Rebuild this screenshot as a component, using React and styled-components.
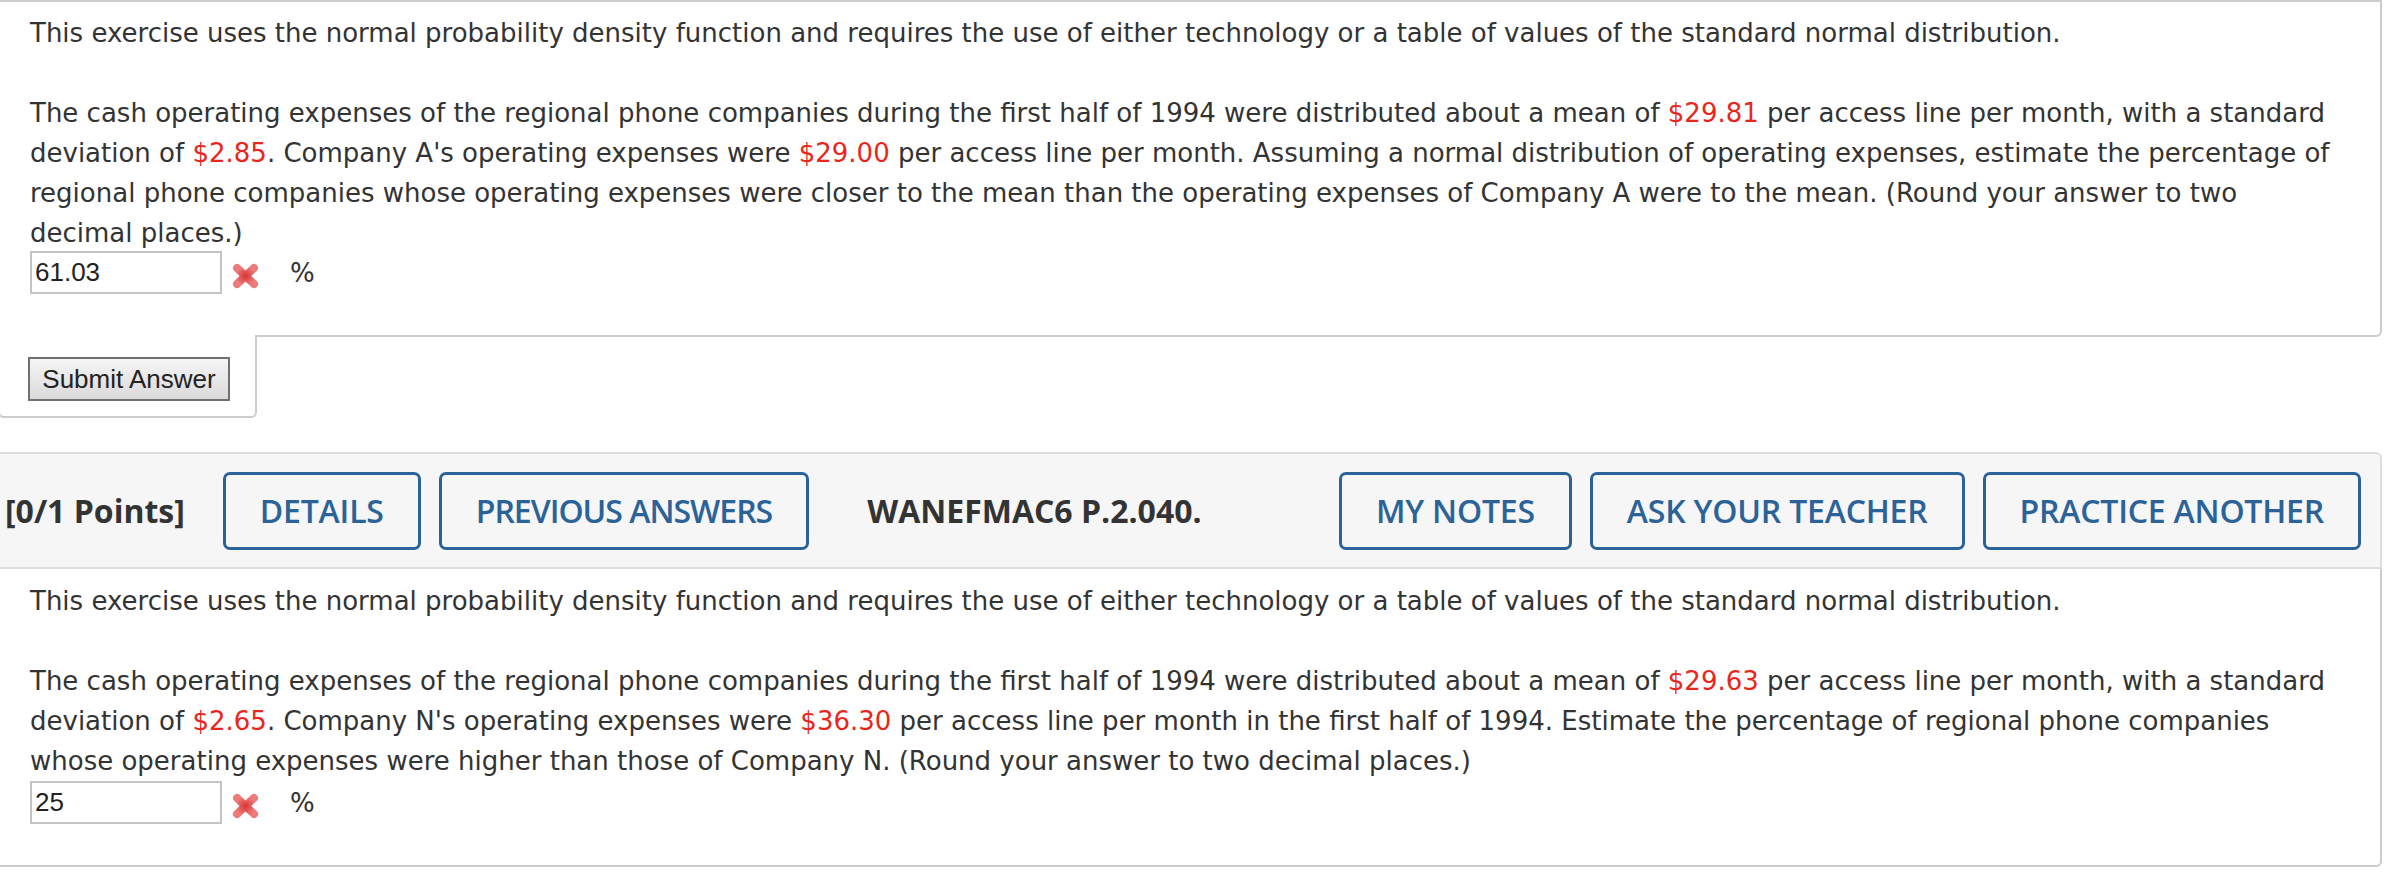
import React from 'react';
import styled, { createGlobalStyle } from 'styled-components';

const GlobalStyle = createGlobalStyle`
  body {
    margin: 0;
    background: #fff;
  }
`;

const Page = styled.div`
  margin-left: -2px;
  width: 2384px;
  font-family: "DejaVu Sans", Verdana, sans-serif;
  font-size: 26px;
  line-height: 40px;
  color: #333;

  * {
    box-sizing: border-box;
  }
`;

const QuestionBox = styled.div`
  border: 2px solid #ccc;
  border-radius: 0 0 6px 0;
  padding: 11px 28px 41px 30px;
`;

const LastBox = styled(QuestionBox)`
  border-top: none;
  padding-top: 12px;
`;

const Para = styled.p`
  margin: 0 0 ${(p) => (p.$gap ? '40px' : '0')};
  white-space: nowrap;
`;

const Red = styled.span`
  color: #e8271c;
`;

const AnswerRow = styled.div`
  display: flex;
  align-items: center;
  height: 43px;
  margin-top: ${(p) => p.$shift || 0}px;
`;

const AnswerInput = styled.input`
  width: 192px;
  height: 43px;
  border: 2px solid #c4c4c4;
  padding: 0 0 0 3px;
  font-family: "Liberation Sans", Arial, sans-serif;
  font-size: 26px;
  color: #222;
  background: #fff;
  margin: 0;
`;

const Percent = styled.span`
  margin-left: 31px;
`;

const Mark = styled.svg`
  width: 27px;
  height: 26px;
  margin-left: 10px;
  margin-top: 6px;
`;

const SubmitTab = styled.div`
  position: relative;
  margin-top: -2px;
  width: 259px;
  background: #fff;
  border: 2px solid #ccc;
  border-top: none;
  border-radius: 0 0 6px 6px;
  padding: 22px 0 15px 28px;
`;

const SubmitButton = styled.button`
  display: block;
  width: 202px;
  height: 44px;
  padding: 0;
  border: 2px solid #707070;
  background: linear-gradient(#f5f5f5, #dadada);
  font-family: "Liberation Sans", Arial, sans-serif;
  font-size: 26px;
  color: #222;
`;

const Toolbar = styled.div`
  margin-top: 34px;
  height: 117px;
  display: flex;
  align-items: center;
  justify-content: space-between;
  padding: 0 19px 0 5px;
  background: #f6f6f6;
  border: 2px solid #ddd;
  border-radius: 0 6px 0 0;
  font-family: "Open Sans", "DejaVu Sans", sans-serif;
  font-size: 32px;
  line-height: 44px;
`;

const Group = styled.div`
  display: flex;
  align-items: center;
  gap: 18px;
`;

const Points = styled.span`
  font-weight: 700;
  color: #333;
  margin-right: 20px;
`;

const Title = styled.span`
  font-weight: 700;
  color: #333;
  margin-left: 40px;
`;

const ToolButton = styled.button`
  height: 78px;
  padding: 0 34px;
  border: 3px solid #2b6399;
  border-radius: 7px;
  background: transparent;
  color: #2b6399;
  font-family: inherit;
  font-size: 32px;
  font-weight: 600;
  line-height: 44px;
  letter-spacing: ${(p) => (p.$narrow ? '-1px' : '-0.2px')};
  white-space: nowrap;
`;

const WrongMark = () => (
  <Mark viewBox="0 0 27 26">
    <defs>
      <radialGradient id="xg" cx="50%" cy="50%" r="60%">
        <stop offset="0%" stopColor="#d83434" />
        <stop offset="100%" stopColor="#ee7b7b" />
      </radialGradient>
    </defs>
    <g stroke="url(#xg)" strokeWidth="8" strokeLinecap="round">
      <line x1="5" y1="5" x2="22" y2="21" />
      <line x1="22" y1="5" x2="5" y2="21" />
    </g>
  </Mark>
);

const Answer = ({ value, shift }) => (
  <AnswerRow $shift={shift}>
    <AnswerInput defaultValue={value} />
    <WrongMark />
    <Percent>%</Percent>
  </AnswerRow>
);

const intro =
  'This exercise uses the normal probability density function and requires the use of either technology or a table of values of the standard normal distribution.';

export default function App() {
  return (
    <>
      <GlobalStyle />
      <Page>
        <QuestionBox>
          <Para $gap>{intro}</Para>
          <Para>
            The cash operating expenses of the regional phone companies during the first half of 1994 were distributed about a mean of <Red>$29.81</Red> per access line per month, with a standard
            <br />
            deviation of <Red>$2.85</Red>. Company A's operating expenses were <Red>$29.00</Red> per access line per month. Assuming a normal distribution of operating expenses, estimate the percentage of
            <br />
            regional phone companies whose operating expenses were closer to the mean than the operating expenses of Company A were to the mean. (Round your answer to two
            <br />
            decimal places.)
          </Para>
          <Answer value="61.03" shift={-2} />
        </QuestionBox>
        <SubmitTab>
          <SubmitButton>Submit Answer</SubmitButton>
        </SubmitTab>

        <Toolbar>
          <Group>
            <Points>[0/1 Points]</Points>
            <ToolButton>DETAILS</ToolButton>
            <ToolButton $narrow>PREVIOUS ANSWERS</ToolButton>
            <Title>WANEFMAC6 P.2.040.</Title>
          </Group>
          <Group>
            <ToolButton>MY NOTES</ToolButton>
            <ToolButton>ASK YOUR TEACHER</ToolButton>
            <ToolButton>PRACTICE ANOTHER</ToolButton>
          </Group>
        </Toolbar>
        <LastBox>
          <Para $gap>{intro}</Para>
          <Para>
            The cash operating expenses of the regional phone companies during the first half of 1994 were distributed about a mean of <Red>$29.63</Red> per access line per month, with a standard
            <br />
            deviation of <Red>$2.65</Red>. Company N's operating expenses were <Red>$36.30</Red> per access line per month in the first half of 1994. Estimate the percentage of regional phone companies
            <br />
            whose operating expenses were higher than those of Company N. (Round your answer to two decimal places.)
          </Para>
          <Answer value="25" />
        </LastBox>
      </Page>
    </>
  );
}
